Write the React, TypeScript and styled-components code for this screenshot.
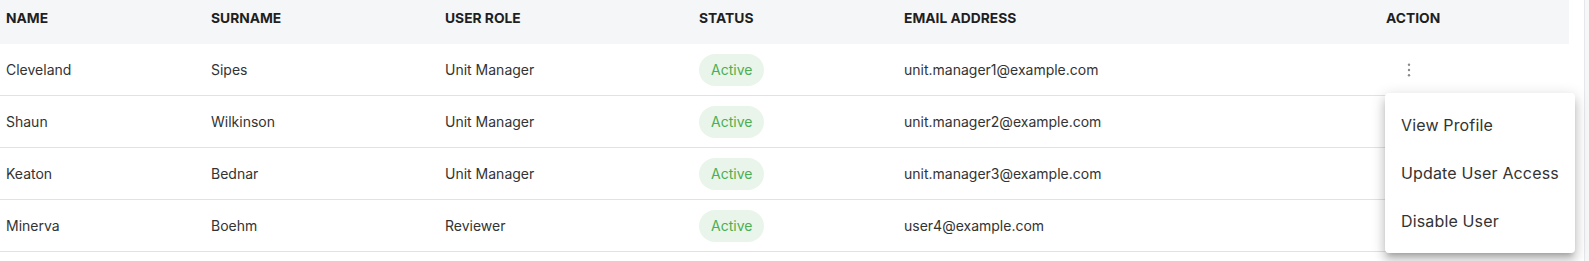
import React from "react";
import styled, { createGlobalStyle } from "styled-components";

const GlobalStyle = createGlobalStyle`
  html, body {
    margin: 0;
    padding: 0;
    background: #ffffff;
    font-family: Inter, "Noto Sans", "Liberation Sans", sans-serif;
  }
`;

const Page = styled.div`
  display: flex;
  width: 1589px;
  height: 261px;
  overflow: hidden;
`;

const TableWrap = styled.div`
  width: 1569px;
  flex-shrink: 0;
`;

const Spacer = styled.div`
  flex: 1;
`;

const ScrollTrack = styled.div`
  width: 4px;
  border-left: 1px solid #e6e7ea;
  background: #f7f7f8;
`;

const COLUMNS = "205px 234px 254px 205px 482px 189px";

const HeaderRow = styled.div`
  display: grid;
  grid-template-columns: ${COLUMNS};
  height: 44px;
  background: #f5f6f8;
`;

const HeaderCell = styled.div`
  display: flex;
  align-items: center;
  padding: 0 0 8px 6px;
  font-size: 13.8px;
  font-weight: 700;
  color: #1f1f1f;
`;

const Row = styled.div`
  display: grid;
  grid-template-columns: ${COLUMNS};
  height: 51px;
  border-bottom: 1px solid #e2e2e2;
`;

const Cell = styled.div`
  position: relative;
  display: flex;
  align-items: center;
  padding-left: 6px;
  font-size: 14px;
  color: #333333;
`;

const Badge = styled.span`
  display: inline-flex;
  align-items: center;
  justify-content: center;
  height: 32px;
  padding: 0 12px;
  border-radius: 16px;
  background: #e9f5ea;
  color: #4caf50;
  font-size: 14px;
  font-weight: 400;
`;

const KebabButton = styled.button`
  display: inline-flex;
  align-items: center;
  justify-content: center;
  width: 24px;
  height: 24px;
  margin-left: 11px;
  padding: 0;
  border: none;
  background: transparent;
  cursor: pointer;
`;

const Menu = styled.ul`
  position: absolute;
  top: 49px;
  left: 5px;
  z-index: 10;
  width: 190px;
  margin: 0;
  padding: 8px 0;
  list-style: none;
  background: #ffffff;
  border-radius: 4px;
  box-shadow: 0 5px 5px -3px rgba(0, 0, 0, 0.2), 0 8px 10px 1px rgba(0, 0, 0, 0.14),
    0 3px 14px 2px rgba(0, 0, 0, 0.12);
`;

const MenuItem = styled.li`
  display: flex;
  align-items: center;
  height: 48px;
  padding: 0 16px;
  font-size: 16px;
  letter-spacing: 0.15px;
  color: #333333;
  white-space: nowrap;
  cursor: pointer;
`;

type User = {
  name: string;
  surname: string;
  role: string;
  status: string;
  email: string;
};

const users: User[] = [
  { name: "Cleveland", surname: "Sipes", role: "Unit Manager", status: "Active", email: "unit.manager1@example.com" },
  { name: "Shaun", surname: "Wilkinson", role: "Unit Manager", status: "Active", email: "unit.manager2@example.com" },
  { name: "Keaton", surname: "Bednar", role: "Unit Manager", status: "Active", email: "unit.manager3@example.com" },
  { name: "Minerva", surname: "Boehm", role: "Reviewer", status: "Active", email: "user4@example.com" },
];

const headers = ["NAME", "SURNAME", "USER ROLE", "STATUS", "EMAIL ADDRESS", "ACTION"];

const KebabIcon = () => (
  <svg width="4" height="16" viewBox="0 0 4 16">
    <circle cx="2" cy="2.7" r="1.2" fill="#8a8a8a" />
    <circle cx="2" cy="8" r="1.2" fill="#8a8a8a" />
    <circle cx="2" cy="13.3" r="1.2" fill="#8a8a8a" />
  </svg>
);

const App: React.FC = () => {
  const openIndex = 0;
  return (
    <Page>
      <GlobalStyle />
      <TableWrap>
        <HeaderRow>
          {headers.map((h) => (
            <HeaderCell key={h}>{h}</HeaderCell>
          ))}
        </HeaderRow>
        {users.map((u, i) => (
          <Row key={u.email}>
            <Cell>{u.name}</Cell>
            <Cell>{u.surname}</Cell>
            <Cell>{u.role}</Cell>
            <Cell>
              <Badge>{u.status}</Badge>
            </Cell>
            <Cell>{u.email}</Cell>
            <Cell>
              {i === openIndex && (
                <>
                  <KebabButton aria-label="actions">
                    <KebabIcon />
                  </KebabButton>
                  <Menu>
                    <MenuItem>View Profile</MenuItem>
                    <MenuItem>Update User Access</MenuItem>
                    <MenuItem>Disable User</MenuItem>
                  </Menu>
                </>
              )}
            </Cell>
          </Row>
        ))}
      </TableWrap>
      <Spacer />
      <ScrollTrack />
    </Page>
  );
};

export default App;
